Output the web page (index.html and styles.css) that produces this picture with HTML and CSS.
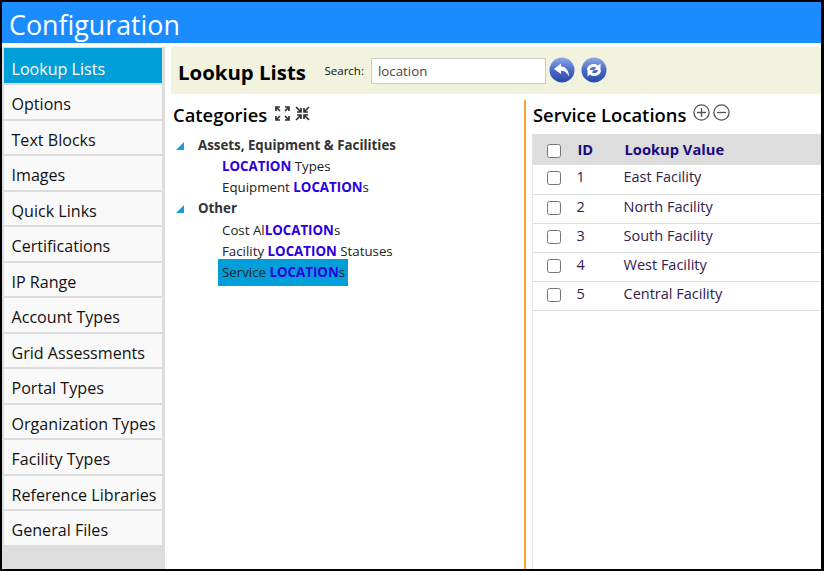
FILE: index.html
```html
<!DOCTYPE html>
<html lang="en">
<head>
<meta charset="utf-8">
<title>Configuration</title>
<link rel="stylesheet" href="styles.css">
</head>
<body>
<div class="frame">
  <header class="top">Configuration</header>
  <div class="main">
    <nav class="side">
      <a class="item active">Lookup Lists</a>
      <a class="item">Options</a>
      <a class="item">Text Blocks</a>
      <a class="item">Images</a>
      <a class="item">Quick Links</a>
      <a class="item">Certifications</a>
      <a class="item">IP Range</a>
      <a class="item">Account Types</a>
      <a class="item">Grid Assessments</a>
      <a class="item">Portal Types</a>
      <a class="item">Organization Types</a>
      <a class="item">Facility Types</a>
      <a class="item">Reference Libraries</a>
      <a class="item">General Files</a>
    </nav>
    <section class="content">
      <div class="band">
        <h1 class="title">Lookup Lists</h1>
        <label class="search-label">Search:</label>
        <input class="search" type="text" value="location">
        <svg class="orb" viewBox="0 0 26 26"><defs><linearGradient id="g1" x1="0" y1="0" x2="0" y2="1"><stop offset="0" stop-color="#8fa8e6"/><stop offset=".5" stop-color="#4a6cc8"/><stop offset="1" stop-color="#2b47a8"/></linearGradient></defs><circle cx="13" cy="13" r="12.5" fill="url(#g1)"/><path d="M12 6.5 L5 12 L12 17 V13.8 C15.5 13.6 18 15.5 20 19.5 C20 14 17 9.8 12 9.6 Z" fill="#fff"/></svg>
        <svg class="orb" viewBox="0 0 26 26"><defs><linearGradient id="g2" x1="0" y1="0" x2="0" y2="1"><stop offset="0" stop-color="#8fa8e6"/><stop offset=".5" stop-color="#4a6cc8"/><stop offset="1" stop-color="#2b47a8"/></linearGradient></defs><circle cx="13" cy="13" r="12.5" fill="url(#g2)"/><path d="M6 13 C6 9 9.5 6.8 13 7 C14.6 7 16 7.6 17 8.6 L19.5 6.5 V13 H13 L15.2 10.8 C13 8.9 9.5 9.8 8.8 13 Z M20 13 C20 17 16.5 19.2 13 19 C11.4 19 10 18.4 9 17.4 L6.5 19.5 V13 H13 L10.8 15.2 C13 17.1 16.5 16.2 17.2 13 Z" fill="#fff"/></svg>
      </div>
      <div class="panes">
        <div class="left">
          <div class="pane-head">
            <h2 class="h2">Categories</h2>
            <svg class="tool" viewBox="0 0 15 15" fill="none" stroke="#333" stroke-width="1.7"><path d="M1 5V1H5M1 1L5 5M10 1H14V5M14 1L10 5M1 10V14H5M1 14L5 10M14 10V14H10M14 14L10 10"/></svg>
            <svg class="tool" viewBox="0 0 15 15" fill="none" stroke="#333" stroke-width="1.7"><path d="M6 2V6H2M6 6L1 1M9 2V6H13M9 6L14 1M6 13V9H2M6 9L1 14M9 13V9H13M9 9L14 14"/></svg>
          </div>
          <ul class="tree">
            <li class="group"><span class="arrow"></span>Assets, Equipment &amp; Facilities</li>
            <li class="leaf"><span><b>LOCATION</b> Types</span></li>
            <li class="leaf"><span>Equipment <b>LOCATION</b>s</span></li>
            <li class="group"><span class="arrow"></span>Other</li>
            <li class="leaf"><span>Cost Al<b>LOCATION</b>s</span></li>
            <li class="leaf"><span>Facility <b>LOCATION</b> Statuses</span></li>
            <li class="leaf selected"><span>Service <b>LOCATION</b>s</span></li>
          </ul>
        </div>
        <div class="right">
          <div class="pane-head r-head">
            <h2 class="h2">Service Locations</h2>
            <svg class="circ" viewBox="0 0 17 17" fill="none" stroke="#555" stroke-width="1.3"><circle cx="8.5" cy="8.5" r="7.6"/><path d="M4 8.5H13M8.5 4V13"/></svg>
            <svg class="circ" viewBox="0 0 17 17" fill="none" stroke="#555" stroke-width="1.3"><circle cx="8.5" cy="8.5" r="7.6"/><path d="M4 8.5H13"/></svg>
          </div>
          <table class="grid">
            <thead>
              <tr><th class="c1"><input type="checkbox"></th><th class="c2">ID</th><th>Lookup Value</th></tr>
            </thead>
            <tbody>
              <tr><td class="c1"><input type="checkbox"></td><td class="c2">1</td><td>East Facility</td></tr>
              <tr><td class="c1"><input type="checkbox"></td><td class="c2">2</td><td>North Facility</td></tr>
              <tr><td class="c1"><input type="checkbox"></td><td class="c2">3</td><td>South Facility</td></tr>
              <tr><td class="c1"><input type="checkbox"></td><td class="c2">4</td><td>West Facility</td></tr>
              <tr><td class="c1"><input type="checkbox"></td><td class="c2">5</td><td>Central Facility</td></tr>
            </tbody>
          </table>
        </div>
      </div>
    </section>
  </div>
</div>
</body>
</html>
```

FILE: styles.css
```css
* { box-sizing: border-box; }
html, body { margin: 0; height: 100%; }
body { font-family: "Open Sans", "Noto Sans", sans-serif; background: #000; overflow: hidden; }
.frame { width: 824px; height: 571px; padding: 2px 3px 2px 2px; display: flex; flex-direction: column; }
.top { height: 41px; background: #1a8cff; color: #fff; font-size: 26.8px; line-height: 45px; padding-left: 7px; flex: none; }
.main { flex: 1; display: flex; background: #fff; padding-top: 4px; min-height: 0; }
.side { width: 163px; flex: none; background: #ddd; padding: 1px 3px 0 2px; display: flex; flex-direction: column; gap: 2px; }
.item { height: 33.5px; background: #f9f9f9; color: #111; font-size: 16.1px; line-height: 39px; padding-left: 7.5px; white-space: nowrap; }
.item.active { height: 35px; background: #009fd9; color: #fff; line-height: 43px; }
.content { flex: 1; min-width: 0; padding-left: 6px; display: flex; flex-direction: column; }
.band { height: 47px; background: #f2f3df; display: flex; align-items: center; padding-left: 7px; flex: none; }
.title { margin: 3px 18.6px 0 0; font-size: 20.4px; font-weight: 700; color: #000; }
.search-label { font-size: 11.5px; color: #111; margin-right: 7px; }
.search { width: 175px; height: 26px; border: 1px solid #ccc; background: #fff; font: 13.3px "Open Sans", sans-serif; color: #444; padding: 0 6px; margin-right: 3px; outline: none; }
.orb { width: 26px; height: 26px; margin: 0 6px 2px 0; }
.panes { flex: 1; display: flex; min-height: 0; padding-top: 6px; }
.left { width: 359px; flex: none; margin-left: -6px; padding-left: 8px; }
.pane-head { display: flex; align-items: flex-start; height: 34px; }
.h2 { margin: 0; font-size: 18.4px; font-weight: 600; color: #000; line-height: 30px; }
.tool { width: 15px; height: 15px; margin: 6px 0 0 8px; }
.tool + .tool { margin-left: 5px; }
.tree { list-style: none; margin: 0; padding: 1px 0 0; font-size: 13.3px; color: #222; }
.group { height: 21.3px; line-height: 21px; font-weight: 700; color: #333; position: relative; padding-left: 25px; }
.arrow { position: absolute; left: 3px; top: 7px; width: 0; height: 0; border-style: solid; border-width: 0 0 8px 8px; border-color: transparent transparent #1a9cd8 transparent; }
.leaf { height: 21px; line-height: 21px; padding-left: 49px; }
.leaf b { color: #2a00e0; font-weight: 700; }
.leaf.selected { margin-left: 45px; padding-left: 4px; width: 130px; height: 27px; line-height: 26px; background: #009fd9; margin-top: -2.6px; }
.right { flex: 1; min-width: 0; border-left: 2px solid #f9a52f; padding-left: 6px; position: relative; margin-left: 0; }
.circ { width: 17px; height: 17px; margin: 4px 0 0 3px; }
.r-head .h2 + .circ { margin-left: 7px; }
.r-head { padding-left: 1px; }
.grid { width: 100%; border-collapse: collapse; border-left: 1px solid #ddd; font-size: 14.5px; color: #32204d; }
.right::after { content: ""; position: absolute; left: 6px; top: 34px; bottom: 0; width: 1px; background: #e4e4e4; }
.grid th { height: 31px; background: #ddd; text-align: left; color: #1a0a80; font-weight: 700; font-size: 14.7px; padding: 0 0 2px 1px; }
.grid td { height: 29px; border-bottom: 1px solid #ddd; padding: 0 0 5px; }
.c1 { width: 44px; padding-left: 14px !important; }
.c2 { width: 47px; }
.grid input { margin: 0; width: 14px; height: 14px; vertical-align: middle; }
```
